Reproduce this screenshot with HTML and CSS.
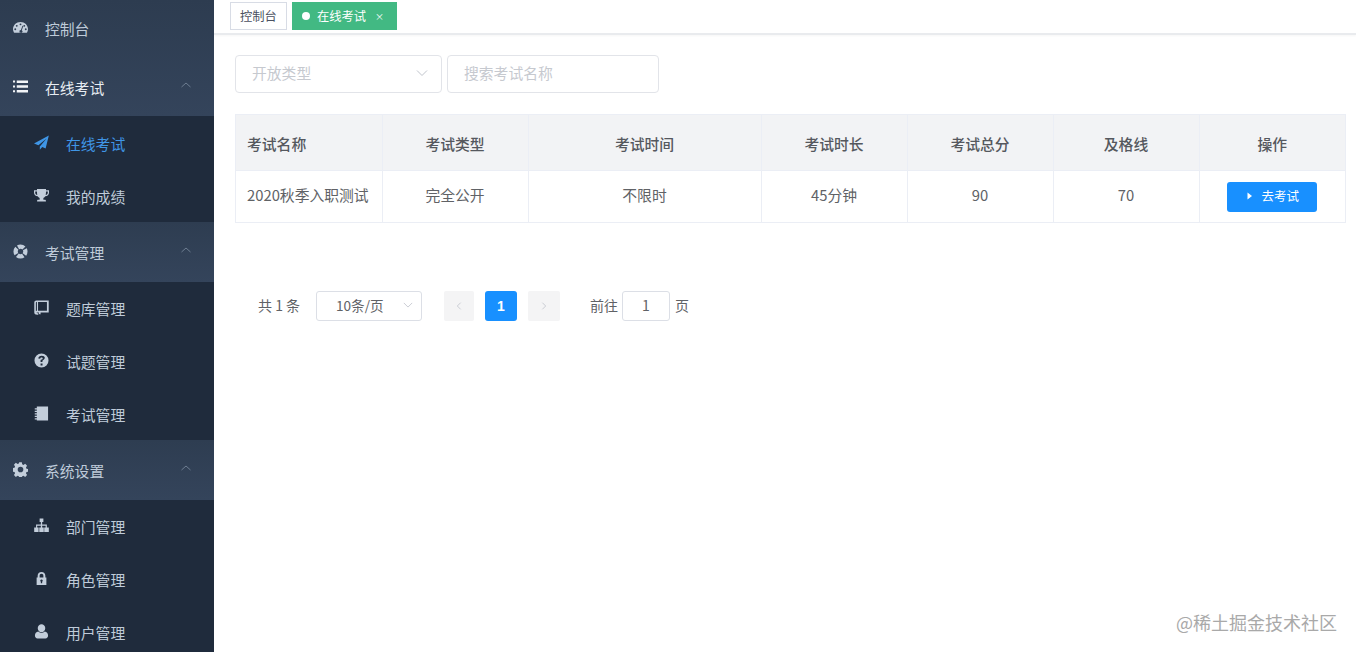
FILE: index.html
```html
<!DOCTYPE html>
<html lang="zh">
<head>
<meta charset="utf-8">
<title>在线考试</title>
<link rel="stylesheet" href="styles.css">
</head>
<body>
<div class="app">
  <aside class="sidebar">
    <div class="top-group">
      <a class="head head-short head-top"><svg class="ico" viewBox="0 0 16 16"><path fill-rule="evenodd" d="M8 2C3.400 2 0 5.500 0 9.600c0 1.400.3 2.500 1 3.600.2.300.5.500.9.500h12.200c.4 0 .7-.2.9-.5.7-1.100 1-2.200 1-3.600C16 5.500 12.600 2 8 2zM8 3.600a1 1 0 1 1 0 2 1 1 0 0 1 0-2zM4 5.200a1 1 0 1 1 0 2 1 1 0 0 1 0-2zm8 0a1 1 0 1 1 0 2 1 1 0 0 1 0-2zM2.400 8.800a1 1 0 1 1 0 2 1 1 0 0 1 0-2zm11.200 0a1 1 0 1 1 0 2 1 1 0 0 1 0-2zM10.100 6l.9.400-1.600 4.500a1.600 1.600 0 1 1-1-.3z"/></svg><span>控制台</span></a>
      <a class="head head-short"><svg class="ico ico-white" viewBox="0 0 16 16"><path d="M0 1.500h2.200v2.200H0zM4 1.500h12v2.800H4zM0 6.800h2.200V9H0zM4 6.600h12v2.800H4zM0 12h2.200v2.200H0zM4 11.700h12v2.800H4z"/></svg><span class="white">在线考试</span><svg class="chev" viewBox="0 0 12 12"><path d="M1.500 8 6 4l4.500 4"/></svg></a>
    </div>
    <div class="sub sub-first">
      <a class="item active"><svg class="ico" viewBox="0 0 16 16"><path d="M15.800.5 0 9l4.700 1.900L13.500 3.800 6.200 12.200V15.800l2.600-3 3.600 1.500z"/></svg><span>在线考试</span></a>
      <a class="item"><svg class="ico" viewBox="0 0 16 16"><path fill-rule="evenodd" d="M3.200 1h9.600v1.300H16v2.700c0 2-1.700 3.700-3.900 3.900-.5.900-1.200 1.500-2.100 1.800v1.700h1.500c.8 0 1.200.5 1.200 1.100v.9H3.300v-.9c0-.6.400-1.100 1.200-1.100H6v-1.700c-.9-.3-1.600-.9-2.100-1.800C1.700 8.700 0 7 0 5V2.300h3.200zM1.300 3.700V5c0 1.100.9 2.100 2.200 2.400-.2-.8-.3-1.800-.3-3.700zm11.500 0c0 1.900-.1 2.900-.3 3.700 1.300-.3 2.200-1.300 2.200-2.400V3.700z"/></svg><span>我的成绩</span></a>
    </div>
    <a class="head"><svg class="ico" viewBox="0 0 16 16"><circle class="ring" cx="8" cy="8" r="5.200"/></svg><span>考试管理</span><svg class="chev" viewBox="0 0 12 12"><path d="M1.500 8 6 4l4.500 4"/></svg></a>
    <div class="sub sub-mid">
      <a class="item"><svg class="ico" viewBox="0 0 16 16"><path fill-rule="evenodd" d="M2.500.5h13.200v12.800H7v2.200l-.9-.7-.9.7v-2.200H4c-.8 0-1.300.1-1.300.4s.5.400 1.300.4h.5v1.600h-1C1.500 15.500.3 14.700.3 13.200V2.700C.3 1.300 1.200.5 2.500.5zM4.300 2.200v9.200h9.500V2.200zM2.700 2.200c-.5 0-.7.200-.7.600v8.900c.4-.2.800-.3 1.100-.3V2.200z"/></svg><span>题库管理</span></a>
      <a class="item"><svg class="ico" viewBox="0 0 16 16"><path fill-rule="evenodd" d="M8 .5a7.500 7.500 0 1 1 0 15A7.500 7.500 0 0 1 8 .5zM7 11.200v2.100h2.100v-2.100zM8.200 3c-2.100 0-3.400 1-3.600 2.800l2 .3c.1-.9.600-1.300 1.500-1.300.7 0 1.200.4 1.200 1 0 .5-.3.800-1 1.300C7.400 6.700 7 7.400 7 8.400v1.200h2v-.9c0-.5.200-.7.900-1.200 1-.7 1.600-1.400 1.600-2.600C11.500 4 10.200 3 8.200 3z"/></svg><span>试题管理</span></a>
      <a class="item"><svg class="ico" viewBox="0 0 16 16"><path d="M3 .5h12v15H3zM.8 2.300h3.600v1.300H.8zM.8 5h3.600v1.300H.8zM.8 7.700h3.600V9H.8zM.8 10.400h3.600v1.300H.8zM.8 13h3.600v1.300H.8z"/></svg><span>考试管理</span></a>
    </div>
    <a class="head"><svg class="ico" viewBox="0 0 16 16"><path fill-rule="evenodd" d="M6.600.3h2.800l.4 2.200 1.300.6 1.900-1.200 2 2-1.200 1.900.6 1.300 2.200.4v2.800l-2.200.4-.6 1.300 1.200 1.900-2 2-1.900-1.200-1.300.6-.4 2.200H6.600l-.4-2.200-1.300-.6-1.900 1.200-2-2 1.200-1.900-.6-1.300-2.200-.4V6.500l2.200-.4.600-1.300-1.200-1.900 2-2 1.900 1.200 1.300-.6zM8 5a3 3 0 1 0 0 6 3 3 0 0 0 0-6z"/></svg><span>系统设置</span><svg class="chev" viewBox="0 0 12 12"><path d="M1.500 8 6 4l4.500 4"/></svg></a>
    <div class="sub">
      <a class="item"><svg class="ico" viewBox="0 0 16 16"><path d="M6 .5h4v3.800H8.700V7h5v3h2.100v5h-4.900v-5h1.500V8.300H8.700V10h1.700v5H5.600v-5h1.700V8.300H3.400V10h1.500v5H.2v-5h2V7h5.100V4.300H6z"/></svg><span>部门管理</span></a>
      <a class="item"><svg class="ico" viewBox="0 0 16 16"><path fill-rule="evenodd" d="M8 1c2.500 0 4.100 1.600 4.100 4v2h1.100v8H2.800V7h1.100V5C3.900 2.600 5.500 1 8 1zM8 3C6.800 3 6 3.800 6 5v2h4V5c0-1.200-.8-2-2-2zM8 9a1.300 1.300 0 0 0-.7 2.400V13h1.400v-1.600A1.300 1.300 0 0 0 8 9z"/></svg><span>角色管理</span></a>
      <a class="item"><svg class="ico" viewBox="0 0 16 16"><path d="M8 .3a4 4 0 0 1 4 4.200C12 6.800 10.200 8.800 8 8.800S4 6.800 4 4.500A4 4 0 0 1 8 .3zM4.500 8c1 .9 2.200 1.500 3.500 1.500s2.500-.6 3.500-1.500c2 .2 3.500 1.800 3.500 4.300 0 1.900-1.100 3.100-2.700 3.100H3.700C2.100 15.400 1 14.200 1 12.300 1 9.800 2.500 8.200 4.500 8z"/></svg><span>用户管理</span></a>
    </div>
  </aside>

  <main class="main">
    <nav class="tags">
      <a class="tag">控制台</a>
      <a class="tag tag-on"><i class="dot"></i>在线考试<span class="close">×</span></a>
    </nav>
    <div class="content">
      <div class="filters">
        <div class="field field-select"><span>开放类型</span><svg class="arrow" viewBox="0 0 12 12"><path d="M1 3.500 6 8.500l5-5"/></svg></div>
        <div class="field field-input"><span>搜索考试名称</span></div>
      </div>
      <table class="grid">
        <colgroup><col class="c1"><col class="c2"><col class="c3"><col class="c4"><col class="c5"><col class="c6"><col class="c7"></colgroup>
        <thead>
          <tr><th class="left">考试名称</th><th>考试类型</th><th>考试时间</th><th>考试时长</th><th>考试总分</th><th>及格线</th><th>操作</th></tr>
        </thead>
        <tbody>
          <tr>
            <td class="left">2020秋季入职测试</td><td>完全公开</td><td>不限时</td><td>45分钟</td><td>90</td><td>70</td>
            <td class="ops"><button class="go"><svg class="play" viewBox="0 0 8 10"><path d="M1.500 1.500 6 5 1.500 8.500z"/></svg>去考试</button></td>
          </tr>
        </tbody>
      </table>
      <div class="pager">
        <span class="total">共 1 条</span>
        <div class="size"><span>10条/页</span><svg class="arrow arrow-sm" viewBox="0 0 12 12"><path d="M1 3.500 6 8.500l5-5"/></svg></div>
        <a class="pg"><svg viewBox="0 0 12 12"><path d="M8 2 4 6l4 4"/></svg></a>
        <a class="pg pg-on">1</a>
        <a class="pg"><svg viewBox="0 0 12 12"><path d="M4 2l4 4-4 4"/></svg></a>
        <span class="goto">前往</span>
        <div class="jump">1</div>
        <span class="page-unit">页</span>
      </div>
    </div>
  </main>
</div>
<div class="watermark">@稀土掘金技术社区</div>
</body>
</html>
```

FILE: styles.css
```css
* { box-sizing: border-box; }
html, body { margin: 0; height: 652px; overflow: hidden; }
body {
  background: #fff;
  color: #606266;
  font-family: "Noto Sans CJK SC", "Liberation Sans", sans-serif;
  font-size: 14.8px;
}
.app { display: flex; height: 652px; }

/* sidebar */
.sidebar { width: 214px; flex: none; height: 652px; overflow: hidden; background: #1f2d3d; color: #bfcbd9; }
.top-group { background: linear-gradient(180deg, #2d3c50 0%, #34445b 100%); }
.head {
  display: flex; align-items: center; height: 60px; padding-left: 13px;
  background: linear-gradient(180deg, #2e3d51 0%, #34445b 100%);
}
.head-short { height: 58px; background: none; }
.head-top { padding-bottom: 2px; }
.ico { width: 15px; height: 15px; fill: #c3cedb; flex: none; margin-top: -2px; }
.ico-white { fill: #f2f5f8; }
.ring { fill: none; stroke: #c3cedb; stroke-width: 4.6; stroke-dasharray: 6.67 1.5; stroke-dashoffset: -4.83; }
.head .ico { margin-right: 17px; }
.white { color: #e8edf2; }
.chev { width: 12px; height: 12px; margin-left: auto; margin-right: 22px; margin-top: -4px; fill: none; stroke: #6d7d91; stroke-width: 1; }
.sub { background: #1f2b3c; }
.sub-first { height: 106px; padding-top: 1px; overflow: hidden; }
.sub-mid { height: 158px; overflow: hidden; }
.item { display: flex; align-items: center; height: 53px; padding-left: 34px; }
.item .ico { margin-right: 17px; }
.active { color: #3f96e6; }
.active .ico { fill: #3f96e6; }

/* main */
.main { flex: 1; min-width: 0; }
.tags {
  display: flex; gap: 5px; height: 35px; padding: 2px 0 0 16px;
  border-bottom: 2px solid #e9ebee;
  box-shadow: 0 1px 2px rgba(0, 0, 0, .04);
}
.tag {
  display: flex; align-items: center; height: 28px; padding: 0 9px;
  border: 1px solid #d8dce5; font-size: 12.3px; color: #495060; background: #fff;
}
.tag-on { background: #42b983; border-color: #42b983; color: #fff; padding: 0 12px 0 9px; }
.dot { width: 8px; height: 8px; border-radius: 50%; background: #fff; margin-right: 7px; }
.close { font-size: 9px; margin-left: 9px; }
.content { padding: 20px 10px 0 21px; }
.filters { display: flex; gap: 5px; }
.field {
  display: flex; align-items: center; height: 38px; padding: 0 16px 3px;
  border: 1px solid #e2e4e9; border-radius: 4px; color: #c6c9cf; background: #fff;
}
.field-select { width: 207px; justify-content: space-between; padding-right: 13px; }
.field-input { width: 212px; }
.arrow { width: 12px; height: 12px; fill: none; stroke: #c0c4cc; stroke-width: 1; }

/* table */
.grid {
  width: 1110px; margin-top: 21px; border-collapse: collapse; table-layout: fixed;
  font-size: 14.8px; color: #606266;
}
.c1, .c7 { width: 146.5px; }
.c2, .c4, .c5, .c6 { width: 146px; }
.c3 { width: 233px; }
.grid th, .grid td { border: 1px solid #ebeef5; text-align: center; padding: 0; }
.grid th { height: 56px; padding-top: 2px; background: #f2f3f5; font-weight: 500; color: #55585e; }
.grid td { height: 52px; padding-bottom: 4px; }
.grid .ops { padding-bottom: 0; }
.grid .left { text-align: left; padding-left: 11px; }
.go {
  display: inline-flex; align-items: center; justify-content: center; width: 90px; height: 30px;
  padding: 0 0 2px 1px; border: 0; border-radius: 3px; background: #1890ff; color: #fff; font: inherit; font-size: 12.5px;
  vertical-align: middle;
}
.play { width: 8px; height: 10px; fill: #fff; margin-right: 7px; }

/* pager */
.pager { display: flex; align-items: center; height: 30px; margin-top: 68px; font-size: 14px; }
.total { width: 58px; margin-left: 23px; flex: none; padding-bottom: 3px; }
.size {
  display: flex; align-items: center; justify-content: space-between; width: 106px; height: 30px;
  padding: 0 8px 3px 19px; border: 1px solid #dcdfe6; border-radius: 3px; font-size: 13.6px;
}
.arrow-sm { width: 10px; height: 10px; }
.pg {
  display: flex; align-items: center; justify-content: center; width: 30px; height: 30px;
  margin-left: 22px; border-radius: 2px; background: #f4f4f5; color: #c0c4cc;
}
.pg + .pg { margin-left: 11px; }
.pg svg { width: 10px; height: 10px; fill: none; stroke: #c0c4cc; stroke-width: 1; }
.pg-on { width: 32px; background: #1890ff; color: #fff; font-family: "Liberation Sans", sans-serif; font-weight: 700; border-radius: 3px; }
.pg-on + .pg { width: 32px; }
.goto { width: 32px; margin-left: 30px; flex: none; padding-bottom: 3px; }
.jump {
  display: flex; align-items: center; justify-content: center; width: 48px; height: 30px;
  padding-bottom: 3px; border: 1px solid #dcdfe6; border-radius: 3px;
}
.page-unit { margin-left: 5px; padding-bottom: 3px; }

/* watermark */
.watermark {
  position: absolute; left: 1176px; top: 609px; font-size: 18px; line-height: 26px; color: #a9a9a9;
}
```
